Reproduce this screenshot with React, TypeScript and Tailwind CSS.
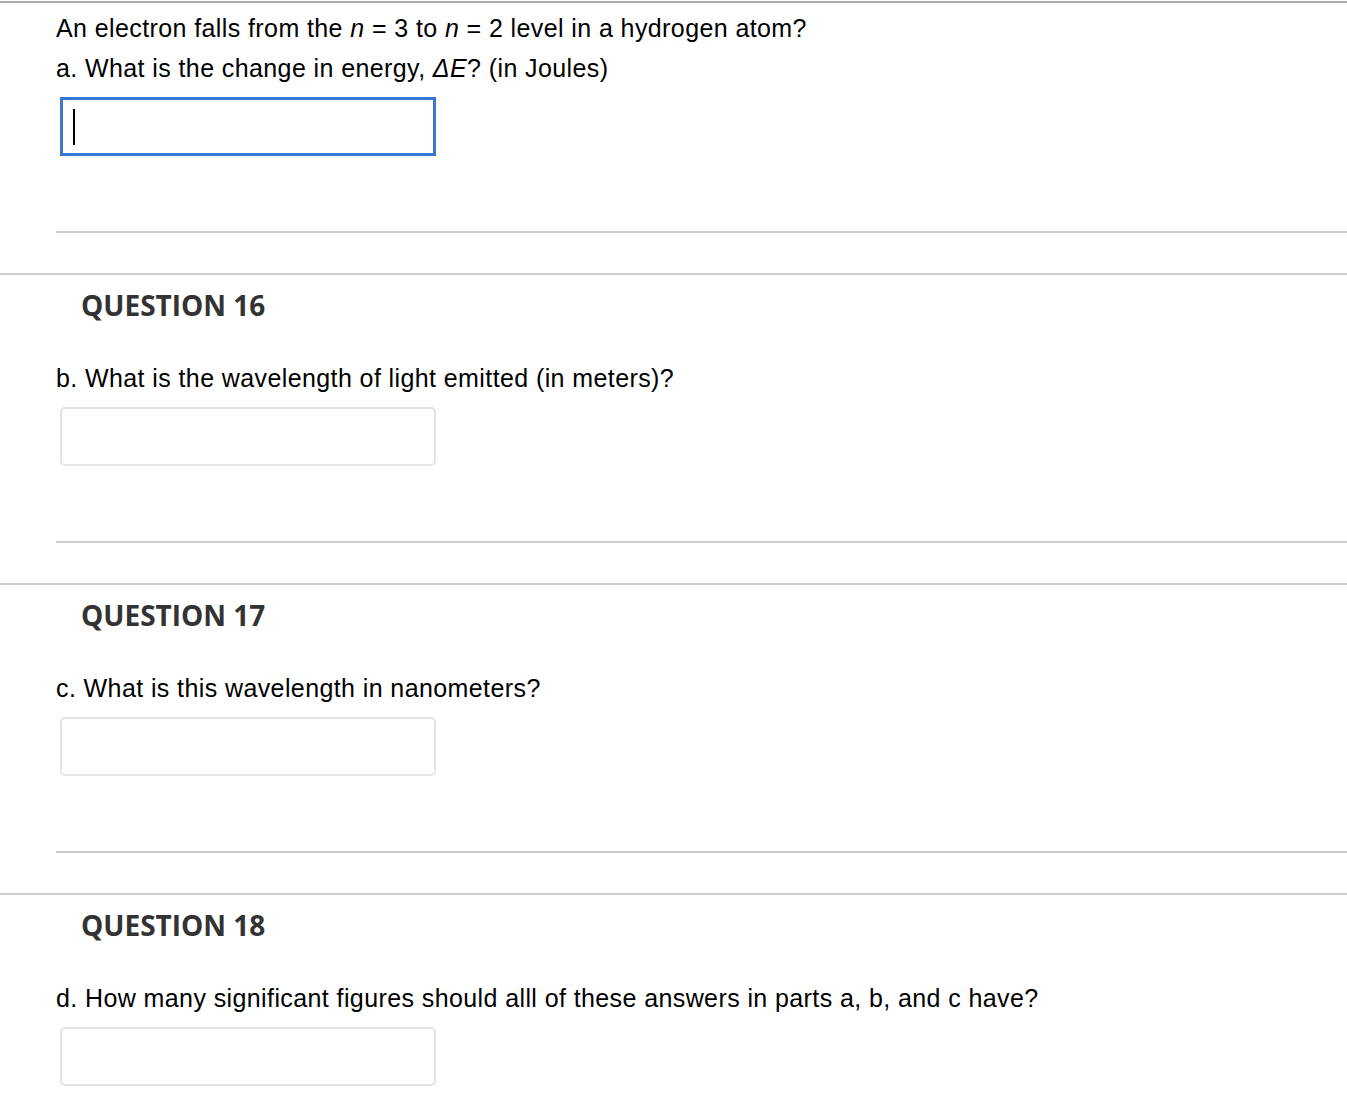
import React from 'react';

const questions = [
  { num: 16, text: 'b. What is the wavelength of light emitted (in meters)?' },
  { num: 17, text: 'c. What is this wavelength in nanometers?' },
  { num: 18, text: 'd. How many significant figures should alll of these answers in parts a, b, and c have?' },
];

const AnswerBox: React.FC = () => (
  <div className="ml-[60px] mt-[9px] h-[59px] w-[376px] rounded-[5px] border-2 border-[#e3e3e3] bg-white" />
);

const Question: React.FC<{ num: number; text: string; last?: boolean }> = ({ num, text, last }) => (
  <section className="border-t-2 border-[#cccccc]">
    <h2 className="pl-[81px] pt-[13px] text-[28px] font-bold leading-[34px] text-[#333333] [font-family:'Open_Sans',sans-serif]">
      QUESTION {num}
    </h2>
    <p className="mt-[36px] pl-[56px] text-[25px] leading-[40px] tracking-[0.4px] text-black">{text}</p>
    <AnswerBox />
    {!last && (
      <>
        <div className="ml-[56px] mt-[75px] border-t-2 border-[#cccccc]" />
        <div className="h-[40px]" />
      </>
    )}
  </section>
);

export default function App() {
  return (
    <div className="min-h-[1118px] bg-white pt-px [font-family:'Liberation_Sans',Arial,sans-serif]">
      <div className="border-t-2 border-[#aaaaaa]">
        <div className="pl-[56px] pt-[5px] text-[25px] leading-[40px] tracking-[0.4px] text-black">
          <p>
            An electron falls from the <i>n</i> = 3 to <i>n</i> = 2 level in a hydrogen atom?
          </p>
          <p>
            a. What is the change in energy, <i>ΔE</i>? (in Joules)
          </p>
        </div>
        <div className="ml-[60px] mt-[9px] flex h-[59px] w-[376px] items-center border-[3px] border-[#3877cf] bg-white pl-[10px]">
          <span className="h-[36px] w-[2px] bg-black" />
        </div>
        <div className="ml-[56px] mt-[75px] border-t-2 border-[#cccccc]" />
        <div className="h-[40px]" />
      </div>
      {questions.map((q, i) => (
        <Question key={q.num} num={q.num} text={q.text} last={i === questions.length - 1} />
      ))}
    </div>
  );
}
